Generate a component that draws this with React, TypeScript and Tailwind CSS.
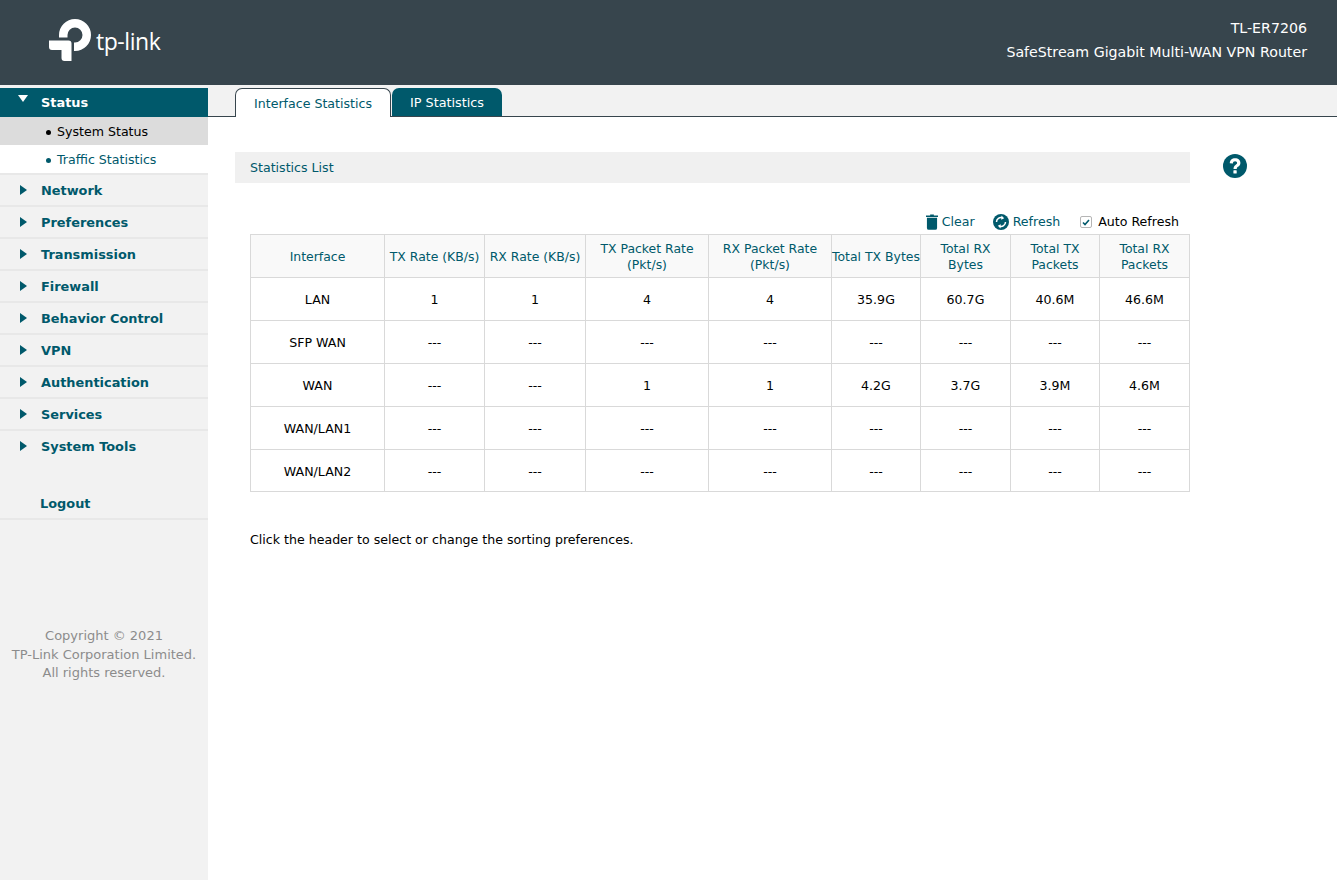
import React from "react";

const T = "text-[#00596b]";
const menu = ["Network", "Preferences", "Transmission", "Firewall", "Behavior Control", "VPN", "Authentication", "Services", "System Tools"];
const head: React.ReactNode[] = ["Interface", "TX Rate (KB/s)", "RX Rate (KB/s)", <>TX Packet Rate<br />(Pkt/s)</>, <>RX Packet Rate<br />(Pkt/s)</>, "Total TX Bytes", <>Total RX<br />Bytes</>, <>Total TX<br />Packets</>, <>Total RX<br />Packets</>];
const widths = ["w-[134px]", "w-[100px]", "w-[101px]", "w-[123px]", "w-[123px]", "w-[89px]", "w-[90px]", "w-[89px]", "w-[90px]"];
const d = "---";
const rows = [
  ["LAN", "1", "1", "4", "4", "35.9G", "60.7G", "40.6M", "46.6M"],
  ["SFP WAN", d, d, d, d, d, d, d, d],
  ["WAN", d, d, "1", "1", "4.2G", "3.7G", "3.9M", "4.6M"],
  ["WAN/LAN1", d, d, d, d, d, d, d, d],
  ["WAN/LAN2", d, d, d, d, d, d, d, d],
];

function Logo() {
  return (
    <svg width="44" height="44" viewBox="0 0 44 44" className="block">
      <path d="M0 22.500h19.500a3 3 0 0 1 3 3V43h-7a3 3 0 0 1-3-3V32H3a3 3 0 0 1-3-3z" fill="#fff" />
      <path d="M10 19.500V17A16 16 0 1 1 26 33H25V24.500H26A7.500 7.500 0 1 0 18.500 17V19.500Z" fill="#fff" />
    </svg>
  );
}

function Caret() {
  return <svg width="7" height="10" viewBox="0 0 7 10" className="block"><path d="M0 0L7 5L0 10Z" fill="#00596b" /></svg>;
}

export default function App() {
  return (
    <div className="w-[1337px] h-[880px] overflow-hidden flex flex-col bg-white font-['DejaVu_Sans',sans-serif] text-[12.6px] text-black">
      <header className="h-[85px] shrink-0 bg-[#37454d] flex justify-between text-white">
        <div className="pl-[49px] pt-[18px] flex items-start">
          <Logo />
          <span className="ml-[3px] mt-[9px] text-[23px] leading-[28px] font-['Open_Sans',sans-serif] tracking-[-0.45px]">tp-link</span>
        </div>
        <div className="pr-[30px] pt-[18px] text-right text-[14.2px] leading-[20px]">
          <div>TL-ER7206</div>
          <div className="mt-[4px]">SafeStream Gigabit Multi-WAN VPN Router</div>
        </div>
      </header>
      <div className="flex flex-1 min-h-0">
        <aside className="w-[208px] shrink-0 bg-[#f2f2f2] flex flex-col pt-[3px]">
          <div className="h-[29px] bg-[#00596b] text-white font-bold text-[12.9px] flex items-center pl-[41px] relative">
            <svg width="10" height="7" viewBox="0 0 10 7" className="absolute left-[18px] top-[7px]"><path d="M0 0H10L5 7Z" fill="#fff" /></svg>
            Status
          </div>
          <div className="h-[28px] bg-[#dcdcdc] flex items-center pl-[46px] pt-[2px]"><span className="mr-[6px] size-[5px] rounded-full bg-black" />System Status</div>
          <div className={`h-[28px] bg-white flex items-center pl-[46px] pt-[2px] ${T}`}><span className="mr-[6px] size-[5px] rounded-full bg-[#00596b]" />Traffic Statistics</div>
          {menu.map((m) => (
            <div key={m} className={`h-[32px] border-t-2 border-[#e8e8e8] flex items-center pl-[20px] font-bold text-[12.9px] ${T}`}>
              <Caret />
              <span className="ml-[14px] pt-[2px]">{m}</span>
            </div>
          ))}
          <div className={`mt-[27px] h-[32px] border-t-2 border-[#e8e8e8] border-b-2 flex items-center pl-[40px] font-bold text-[12.9px] border-t-transparent ${T}`}>Logout</div>
          <div className="mt-[107px] text-center text-[#8c8c8c] text-[13px] leading-[18.500px]">
            <div>Copyright © 2021</div>
            <div>TP-Link Corporation Limited.</div>
            <div>All rights reserved.</div>
          </div>
        </aside>
        <main className="flex-1 min-w-0 flex flex-col">
          <div className="h-[32px] shrink-0 bg-[#f2f2f2] border-b border-[#37454d] pt-[3px] pl-[27px] flex items-start">
            <div className={`h-[29px] w-[156px] bg-white border border-b-0 border-[#37454d] rounded-t-[7px] flex items-center justify-center pt-[2px] relative z-10 ${T}`}>Interface Statistics</div>
            <div className="ml-[1px] h-[28px] w-[110px] bg-[#00596b] text-white text-[12.8px] rounded-t-[7px] flex items-center justify-center pt-[2px]">IP Statistics</div>
          </div>
          <div className="pl-[27px] pt-[35px] relative">
            <div className={`w-[955px] h-[31px] bg-[#f0f0f0] flex items-center pl-[15px] pt-[2px] ${T}`}>Statistics List</div>
            <svg width="24" height="24" viewBox="0 0 24 24" className="absolute left-[1015px] top-[37px]">
              <circle cx="12" cy="12" r="12" fill="#00596b" />
              <path d="M6.800 9.200C6.800 6.300 9 4.300 12.100 4.300C15.300 4.300 17.400 6.200 17.400 8.900C17.400 10.800 16.400 11.800 15 12.800C14 13.500 13.800 13.900 13.800 15H10.500C10.500 13 11.100 12 12.500 11C13.600 10.200 14.100 9.800 14.100 9.100C14.100 8 13.300 7.300 12.100 7.300C10.800 7.300 9.900 8.100 9.900 9.400Z" fill="#fff" />
              <rect x="10.400" y="16.200" width="3.300" height="3.300" rx="0.600" fill="#fff" />
            </svg>
            <div className="w-[955px] pl-[15px]">
              <div className="h-[39px] mt-[13px] flex items-center justify-end pr-[11px] pt-[13px]">
                <svg width="12" height="16" viewBox="0 0 13 17" className="mr-[4px]"><path d="M0 1.500H4.500V0.500H8.500V1.500H13V3H0ZM1 4H12V15A2 2 0 0 1 10 17H3A2 2 0 0 1 1 15Z" fill="#00596b" /></svg>
                <span className={T}>Clear</span>
                <svg width="16" height="16" viewBox="0 0 16 16" className="ml-[18px] mr-[4px]">
                  <circle cx="8" cy="8" r="8" fill="#00596b" />
                  <path d="M3.500 8A4.500 4.500 0 0 1 9.500 3.800M12.500 8A4.500 4.500 0 0 1 6.500 12.200" fill="none" stroke="#fff" strokeWidth="1.500" />
                  <path d="M8.500 1.600L11.200 4.200L8.200 5.700ZM7.500 14.400L4.800 11.800L7.800 10.300Z" fill="#fff" />
                </svg>
                <span className={T}>Refresh</span>
                <span className="ml-[20px] mr-[6px] size-[12px] border border-[#b5b5b5] rounded-[2px] flex items-center justify-center">
                  <svg width="8" height="7" viewBox="0 0 8 7"><path d="M1 3.500L3 5.500L7 1" fill="none" stroke="#00596b" strokeWidth="1.600" /></svg>
                </span>
                <span>Auto Refresh</span>
              </div>
              <table className="w-[940px] table-fixed border-collapse mt-[-1px] text-center">
                <thead>
                  <tr className="h-[43px] bg-[#f9f9f9]">
                    {head.map((h, i) => (
                      <th key={i} className={`${widths[i]} border border-[#d9d9d9] font-normal text-[12.45px] leading-[16px] p-0 pt-[2px] whitespace-nowrap ${T}`}>{h}</th>
                    ))}
                  </tr>
                </thead>
                <tbody>
                  {rows.map((r, ri) => (
                    <tr key={r[0]} className={ri === 4 ? "h-[42px]" : "h-[43px]"}>
                      {r.map((c, i) => (
                        <td key={i} className={`border border-[#d9d9d9] p-0 ${ri === 4 ? "pt-[4px]" : "pt-[2px]"}`}>{c}</td>
                      ))}
                    </tr>
                  ))}
                </tbody>
              </table>
              <p className="mt-[40px] leading-[16px]">Click the header to select or change the sorting preferences.</p>
            </div>
          </div>
        </main>
      </div>
    </div>
  );
}
